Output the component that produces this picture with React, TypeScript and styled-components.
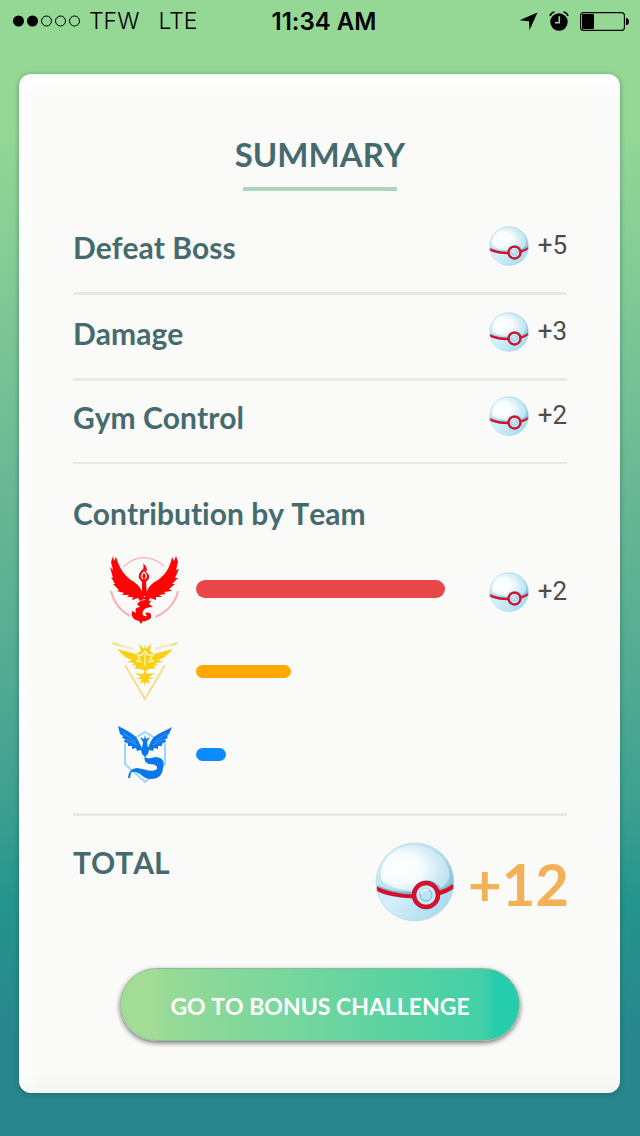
import React from 'react';
import styled, { createGlobalStyle } from 'styled-components';

const GlobalStyle = createGlobalStyle`
  * { box-sizing: border-box; }
  body {
    margin: 0;
    font-family: Lato, 'Liberation Sans', sans-serif;
    font-kerning: none;
    font-variant-ligatures: none;
    color: #456b6e;
  }
  h1, h2, dl, dt, dd, p { margin: 0; font-weight: 700; }
`;

const Screen = styled.div`
  min-height: 100vh;
  display: flex;
  flex-direction: column;
  background: linear-gradient(#95d896 0%, #95d896 11%, #69b795 43%, #52aa92 60%, #3c9f90 71%, #24958c 79%, #28868e 92%, #28868e 100%);
`;

const StatusBar = styled.header`
  display: grid;
  grid-template-columns: 1fr auto 1fr;
  align-items: center;
  height: 42px;
  padding: 0 11px 0 13px;
  font-family: Inter, 'Liberation Sans', sans-serif;
  font-size: 23px;
  color: #000;
`;

const Carrier = styled.div`
  display: flex;
  align-items: center;
  gap: 9px;
  font-weight: 300;
  font-kerning: normal;
`;

const Network = styled.span`
  margin-left: 10px;
`;

const Clock = styled.time`
  padding-left: 6px;
  font-size: 24px;
  font-weight: 600;
`;

const StatusIcons = styled.div`
  display: flex;
  align-items: center;
  justify-content: flex-end;
  gap: 11px;
`;

const Card = styled.main`
  margin: 32px 20px 43px 19px;
  padding: 60px 53px 52px 54px;
  border-radius: 12px;
  background:
    linear-gradient(#fff, rgba(255, 255, 255, 0) 22px),
    linear-gradient(to right, #fcfdfc, rgba(252, 253, 252, 0) 24px),
    linear-gradient(to top, #f3f5f0, rgba(243, 245, 240, 0) 22px),
    #fafbf9;
  box-shadow: 0 1px 5px rgba(20, 80, 60, 0.5);
`;

const Title = styled.h1`
  width: fit-content;
  margin: 0 auto;
  font-size: 33px;
  line-height: 40px;
`;

const TitleRule = styled.div`
  width: 154px;
  height: 4px;
  margin: 13px auto 17px;
  background: #aed4bf;
`;

const Rewards = styled.dl`
  display: flex;
  flex-direction: column;
`;

const RewardRow = styled.div`
  display: flex;
  justify-content: space-between;
  align-items: flex-end;
  height: 86px;
  padding-bottom: 26px;
  border-bottom: 3px solid #e7e8e7;

  &:first-child { height: 87px; }
  &:last-child { height: 83px; border-bottom-width: 2px; }
`;

const Label = styled.dt`
  font-size: 30px;
  line-height: 38px;
`;

const Amount = styled.dd`
  display: flex;
  align-items: center;
  gap: 9px;
  font-family: Roboto, sans-serif;
  font-size: 26px;
  line-height: 38px;
  color: #4c4c4c;
`;

const TeamAmount = styled(Amount)`
  padding-top: 6px;
`;

const AmountText = styled.span`
  padding-bottom: 2px;
  font-weight: 400;
`;

const Teams = styled.section`
  height: 352px;
  padding-top: 31px;
  border-bottom: 3px solid #e7e8e7;
`;

const SectionTitle = styled.h2`
  font-size: 30px;
  line-height: 36px;
`;

const TeamRow = styled.div`
  display: grid;
  grid-template-columns: 72px 1fr auto;
  align-items: center;
  column-gap: 15px;
  height: 83px;
  padding-left: 36px;

  &:first-of-type { margin-top: 16px; }
`;

const Bar = styled.div<{ $color: string; $width: number; $thick?: boolean }>`
  width: ${p => p.$width}px;
  height: ${p => (p.$thick ? 18 : 13)}px;
  border-radius: 9px;
  background: ${p => p.$color};
`;

const Total = styled.section`
  display: flex;
  justify-content: space-between;
  align-items: flex-start;
  margin-right: -2px;
  padding-top: 24px;
`;

const TotalLabel = styled.h2`
  padding-top: 4px;
  font-size: 30px;
  line-height: 36px;
`;

const TotalAmount = styled.p`
  display: flex;
  align-items: center;
  gap: 13px;
  font-size: 58px;
  line-height: 80px;
  color: #f3b157;
`;

const TotalNumber = styled.span`
  padding-top: 4px;
`;

const BonusButton = styled.button`
  display: block;
  width: 400px;
  max-width: 100%;
  height: 73px;
  margin: 44px auto 0;
  padding: 2px 0 0;
  border: 1px solid #8fb99b;
  border-radius: 37px;
  background: linear-gradient(to right, #a3dc94 0, #a3dc94 9%, #98da97 11%, #42d0a6 91%, #25cdac 94%, #25cdac 100%);
  box-shadow: 0 2px 5px rgba(0, 0, 0, 0.55);
  font-family: Lato, 'Liberation Sans', sans-serif;
  font-size: 23px;
  font-weight: 700;
  font-kerning: none;
  color: #fff;
  cursor: pointer;
`;

const SignalDots = () => (
  <svg width="67" height="12" viewBox="0 0 67 12" role="img" aria-label="Signal 2 of 5">
    {[0, 1, 2, 3, 4].map(i => (
      <circle key={i} cx={5.5 + i * 14} cy="6" r={i < 2 ? 5.5 : 5} fill={i < 2 ? '#000' : 'none'} stroke={i < 2 ? 'none' : '#000'} />
    ))}
  </svg>
);

const LocationArrow = () => (
  <svg width="19" height="19" viewBox="0 0 19 19" aria-hidden="true">
    <path d="M18.5 .5 10.5 18.2 10 9.3 .5 8.2Z" fill="#000" />
  </svg>
);

const AlarmIcon = () => (
  <svg width="20" height="20" viewBox="0 0 20 20" aria-hidden="true">
    <circle cx="10" cy="11" r="8.7" fill="#000" />
    <path d="M1 5Q2 1.5 5.5 1M19 5Q18 1.5 14.5 1" fill="none" stroke="#000" strokeWidth="1.6" />
    <path d="M10.3 5.2V11.7H6" fill="none" stroke="#95d896" strokeWidth="1.6" />
  </svg>
);

const BatteryIcon = () => (
  <svg width="49" height="19" viewBox="0 0 49 19" role="img" aria-label="Battery low">
    <rect x=".6" y=".6" width="43.8" height="17.8" rx="3" fill="none" stroke="#000" strokeWidth="1.1" />
    <rect x="2" y="2" width="12" height="15" rx="1" fill="#000" />
    <path d="M46 6h1q2 1 2 3.500t-2 3.500h-1Z" fill="#000" />
  </svg>
);

const PremierBall = ({ size, id }: { size: number; id: string }) => (
  <svg width={size} height={size} viewBox="0 0 80 80" aria-hidden="true">
    <defs>
      <linearGradient id={`${id}-rim`} x1=".1" y1="0" x2=".9" y2=".7">
        <stop offset="0" stopColor="#d9eef4" />
        <stop offset=".5" stopColor="#b9dfec" />
        <stop offset="1" stopColor="#86bfd6" />
      </linearGradient>
      <radialGradient id={`${id}-top`} cx=".28" cy=".5" r=".8">
        <stop offset="0" stopColor="#fff" />
        <stop offset=".4" stopColor="#f6fcfe" />
        <stop offset=".75" stopColor="#cbe9f4" />
        <stop offset="1" stopColor="#b9e0ee" />
      </radialGradient>
      <linearGradient id={`${id}-base`} x1="0" y1="0" x2="1" y2=".3">
        <stop offset="0" stopColor="#c9eaf6" />
        <stop offset=".3" stopColor="#d3effa" />
        <stop offset="1" stopColor="#a9dbed" />
      </linearGradient>
      <clipPath id={`${id}-clip`}><circle cx="40" cy="40" r="39" /></clipPath>
    </defs>
    <g clipPath={`url(#${id}-clip)`}>
      <rect width="80" height="80" fill={`url(#${id}-rim)`} />
      <path d="M6 30C9 13 22 4 40 3C58 4 71 15 74 28C76 36 72 42 66 46Q61 38 51 38Q41 40 37 49Q17 47 8 40Q5 36 6 30Z" fill={`url(#${id}-top)`} />
      <path d="M0 46Q18 54 38 54Q40 66 51 66Q62 66 64 52Q73 50 80 44V80H0Z" fill={`url(#${id}-base)`} />
      <path d="M1 46Q17 54 39 53M63 50Q72 49 79 43" fill="none" stroke="#7fb6cc" strokeWidth="6" />
      <path d="M1 46.500Q17 54 39 54.500M63 51.500Q72 49 79 44" fill="none" stroke="#db0c2a" strokeWidth="4" />
    </g>
    <circle cx="40" cy="40" r="39" fill="none" stroke="#b9dfe9" strokeWidth=".8" />
    <circle cx="51" cy="53" r="12" fill="#c9e9f4" stroke="#a41d39" strokeWidth="4.500" />
    <circle cx="51" cy="53" r="12" fill="none" stroke="#e20b2b" strokeWidth="3" />
    <circle cx="51" cy="53" r="6" fill="#bce3f2" stroke="#76aeca" strokeWidth="1" />
    <path d="M46 52Q47 47 53 48" fill="none" stroke="#fff" strokeWidth="1.500" />
  </svg>
);

const ValorLogo = () => (
  <svg width="72" height="70" viewBox="0 0 72 70" role="img" aria-label="Team Valor">
    <g fill="none" stroke="#ffadb6">
      <path d="M14 13Q34-5 55 12" strokeWidth="1.200" />
      <path d="M2 37Q6 54 21 62M69 37Q65 55 46 63" strokeWidth="2" />
    </g>
    <g fill="#fb0505">
      <path d="M35 43C33 35 29 30 22 26C14 20 10 13 7 3L5 7 4 2 2 8 4 16 1 13 4 24 2 23 6 30 4 30 10 36 8 37 15 39 13 41 20 41 18 43 24 43 23 46 29 44 31 47 35 45 39 47 41 44 47 46 47 43 53 43 50 41 57 40 55 38 63 37 60 35 66 30 63 30 69 24 66 24 70 15 67 16 69 8 67 2 65 7 63 3C61 14 56 21 49 26C41 30 38 35 36 43Z" />
      <path d="M33 42 33 28Q27 23 32 17Q36 14 34 9Q40 15 37 18Q42 21 39 26L37 28 38 42Z" />
      <path d="M28 50Q33 44 42 47L40 50 44 53Q36 53 34 57Q32 63 38 62L36 59Q43 57 42 64Q38 68 34 67L32 70 30 67Q21 65 23 57L27 59Q25 53 31 53Z" />
    </g>
    <path d="M34 25Q31 22 35 18Q39 22 36 25" fill="none" stroke="#fff" strokeWidth="1.200" />
  </svg>
);

const InstinctLogo = () => (
  <svg width="72" height="64" viewBox="0 0 72 64" role="img" aria-label="Team Instinct">
    <g fill="none" stroke="#f5dc94" strokeWidth="2">
      <path d="M3 3 24 9M69 3 46 9" stroke="#fae8b5" />
      <path d="m16 25 20 34 20-34" />
    </g>
    <path d="M2 3 7 3 12 7ZM70 3 65 3 61 7Z" fill="#f5d873" />
    <g fill="#fbcf12">
      <path d="M8 9 27 14 32 11 30 4 35 9 36 4 37 9 42 4 41 11 45 14 64 9 56 17 49 20 54 22 47 23 49 26 45 25 46 29Q39 28 36 32Q33 28 26 29L27 25 23 26 25 23 18 22 23 20 16 17Z" />
      <path d="m26 33 8 1 2-3 2 3 8-1-6 4 5 2-6 0 2 5-4-2-1 5-1-5-4 2 2-5-6 0 5-2Z" />
    </g>
    <path d="m28 15 5 0 3-4 3 4 5 0-3 4 3 2-5 1M28 15l3 4-3 2 5 1M36 14V26" fill="none" stroke="#fff5c7" strokeWidth="1.300" />
  </svg>
);

const MysticLogo = () => (
  <svg width="72" height="60" viewBox="0 0 72 60" role="img" aria-label="Team Mystic">
    <path d="M16 19 36 7 56 19V39L49 46M16 19V39L36 57 45 49" fill="none" stroke="#9dd5ff" strokeWidth="2" />
    <g fill="#0878ec">
      <path d="M9 1C17 5 23 8 27 12C30 16 31 20 33 23L34 17 31 12 35 14 36 10 37 14 41 12 38 17 39 23C41 18 42 15 45 12C50 8 56 6 63 2L60 9 58 11 59 13 56 14 57 17 53 18 53 21 49 21 49 24 45 23 44 26 40 25 39 29 36 32 33 29 32 25 28 26 27 23 23 24 23 21 19 21 19 18 15 17 16 14 13 13 14 11 11 9Z" />
      <path d="M36 31Q37 35 46 32Q57 32 54 43Q53 54 42 54Q36 54 31 49Q24 45 22 48L21 53 19 53Q20 43 28 43C36 44 43 48 48 44Q49 39 40 39Q34 37 36 31Z" />
    </g>
    <path d="m14 8 13 9M58 8 45 17M17 14l11 6M55 14l-11 6" stroke="#6db3f6" strokeWidth=".6" />
  </svg>
);

const rewards = [
  { name: 'Defeat Boss', amount: '+5' },
  { name: 'Damage', amount: '+3' },
  { name: 'Gym Control', amount: '+2' },
];

export default function App() {
  return (
    <>
      <GlobalStyle />
      <Screen>
        <StatusBar>
          <Carrier><SignalDots /><span>TFW</span><Network>LTE</Network></Carrier>
          <Clock>11:34 AM</Clock>
          <StatusIcons><LocationArrow /><AlarmIcon /><BatteryIcon /></StatusIcons>
        </StatusBar>
        <Card>
          <Title>SUMMARY</Title>
          <TitleRule />
          <Rewards>
            {rewards.map((r, i) => (
              <RewardRow key={r.name}>
                <Label>{r.name}</Label>
                <Amount><PremierBall size={40} id={`ball${i}`} /><AmountText>{r.amount}</AmountText></Amount>
              </RewardRow>
            ))}
          </Rewards>
          <Teams>
            <SectionTitle>Contribution by Team</SectionTitle>
            <TeamRow>
              <ValorLogo />
              <Bar $color="#e84748" $width={249} $thick />
              <TeamAmount as="div"><PremierBall size={40} id="ball-team" /><AmountText>+2</AmountText></TeamAmount>
            </TeamRow>
            <TeamRow><InstinctLogo /><Bar $color="#ffa800" $width={95} /></TeamRow>
            <TeamRow><MysticLogo /><Bar $color="#0a8cff" $width={30} /></TeamRow>
          </Teams>
          <Total>
            <TotalLabel>TOTAL</TotalLabel>
            <TotalAmount><PremierBall size={80} id="ball-total" /><TotalNumber>+12</TotalNumber></TotalAmount>
          </Total>
          <BonusButton type="button">GO TO BONUS CHALLENGE</BonusButton>
        </Card>
      </Screen>
    </>
  );
}
